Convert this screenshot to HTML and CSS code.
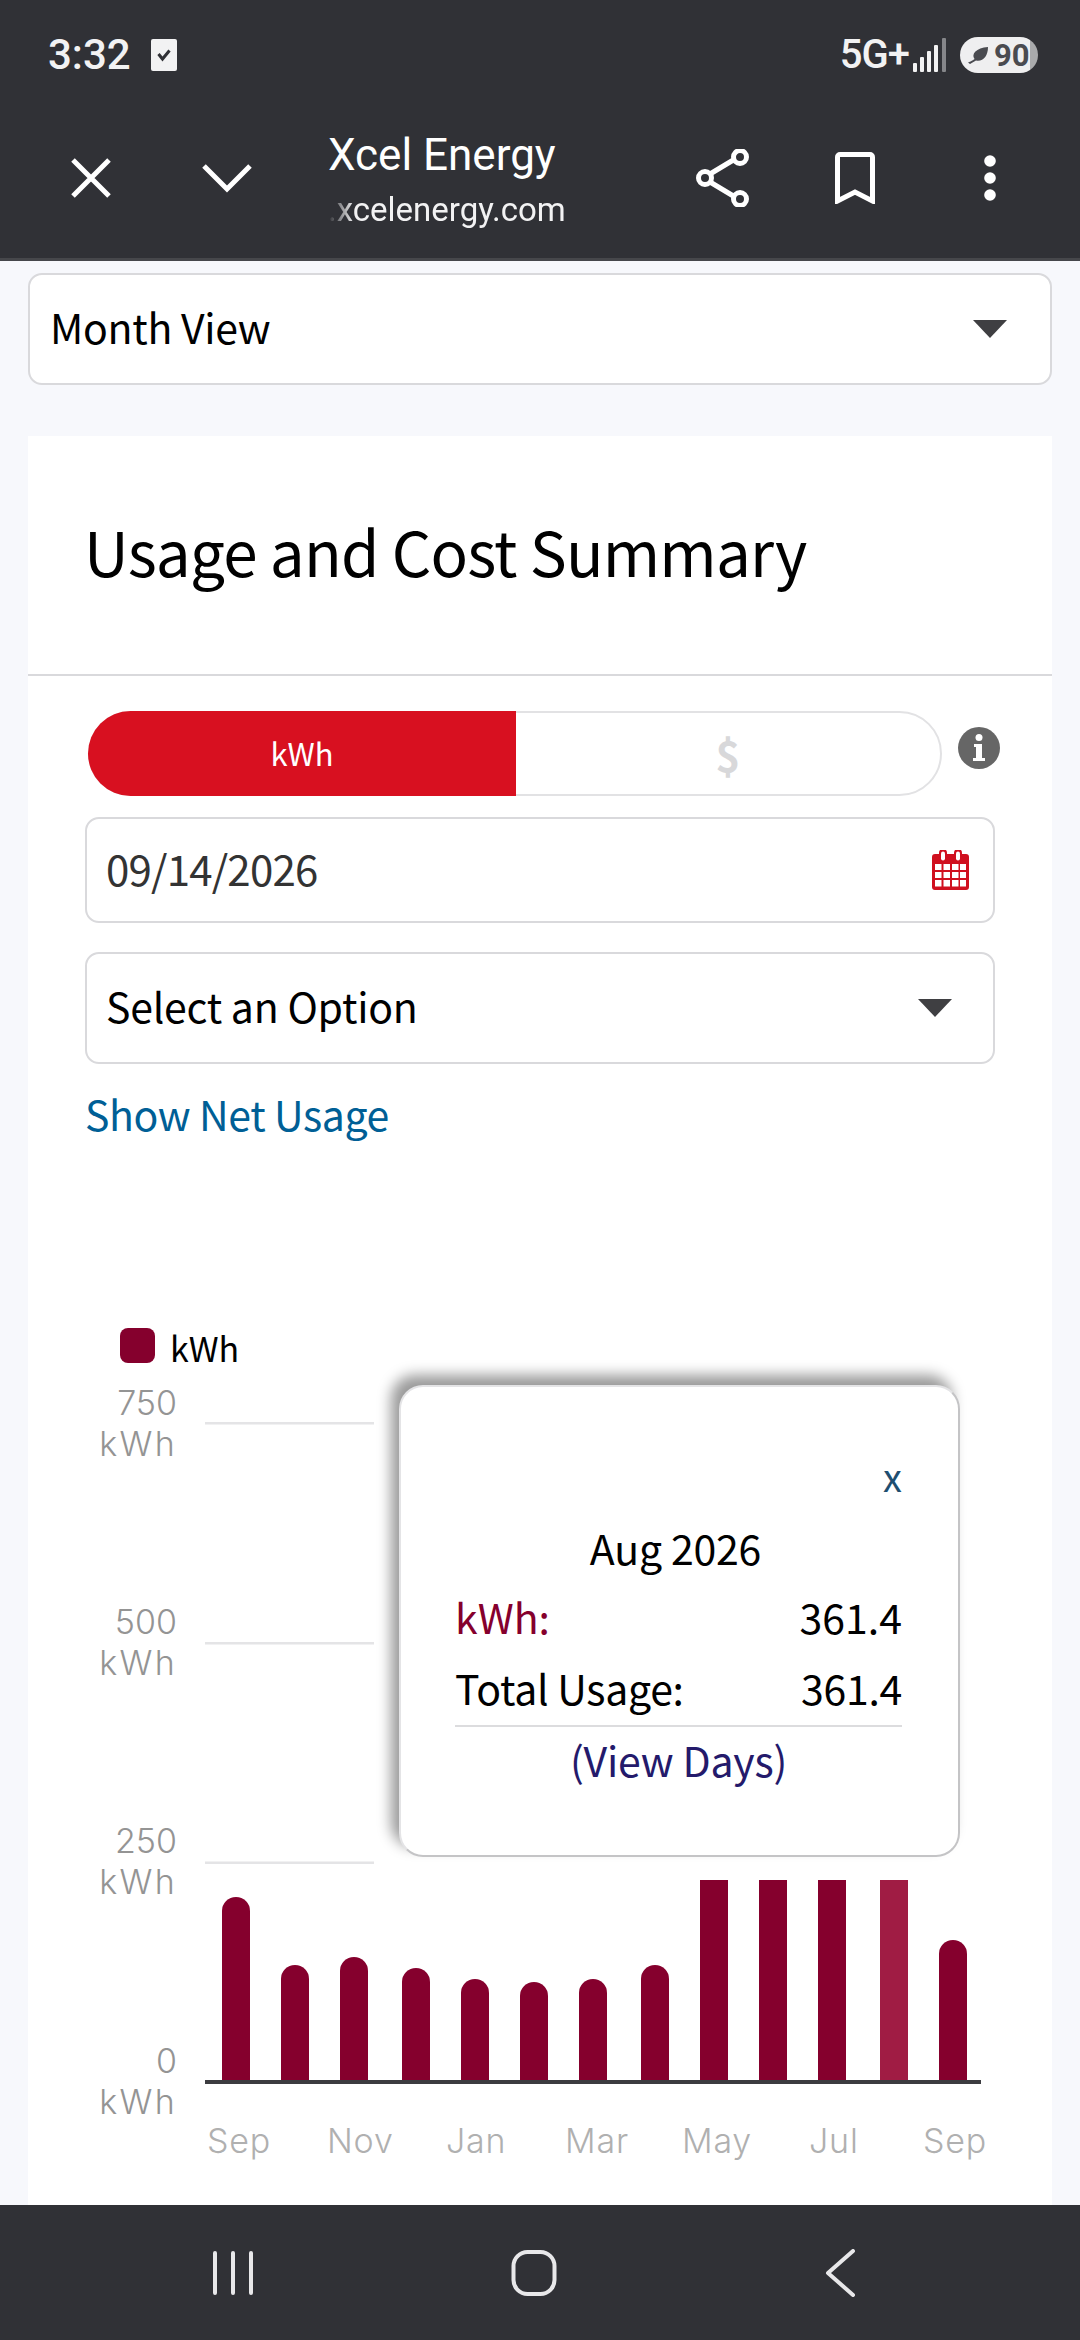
FILE: index.html
```html
<!DOCTYPE html>
<html lang="en">
<head>
<meta charset="utf-8">
<title>Xcel Energy</title>
<link rel="stylesheet" href="styles.css">
</head>
<body>
<div class="screen">
  <header class="top">
    <div class="status">
      <div class="status-left">
        <span class="time">3:32</span>
        <svg class="check" width="26" height="32" viewBox="0 0 26 32"><rect width="26" height="32" rx="2" fill="#f2f2f3"/><path d="M7.5 15l4 5 7-8.5" fill="none" stroke="#303136" stroke-width="3"/></svg>
      </div>
      <div class="status-right">
        <span class="net">5G+</span>
        <svg class="signal" width="34" height="34" viewBox="0 0 34 34"><g fill="#f2f2f3"><rect x="0" y="25" width="4" height="9" rx="1"/><rect x="7" y="19" width="4" height="15" rx="1"/><rect x="14" y="13" width="4" height="21" rx="1"/><rect x="21" y="7" width="4" height="27" rx="1"/></g><rect x="29" y="0" width="4" height="34" rx="1" fill="#85868a"/></svg>
        <div class="battery">
          <svg width="20" height="18" viewBox="0 0 20 18"><path d="M0 16.5C4 15 5 14 6.5 13 3 8 8 2 20 1c0 9-5 15-12 13.500L2 18z" fill="#4a4b50"/></svg>
          <span>90</span>
        </div>
      </div>
    </div>
    <div class="toolbar">
      <svg class="tb-close" width="40" height="40" viewBox="0 0 40 40"><path d="M2 2l36 36M38 2L2 38" stroke="#fff" stroke-width="5" fill="none"/></svg>
      <svg class="tb-chev" width="52" height="30" viewBox="0 0 52 30"><path d="M3 3l23 23L49 3" stroke="#fff" stroke-width="5" fill="none"/></svg>
      <div class="tb-title">
        <div class="tb-name">Xcel Energy</div>
        <div class="tb-url">.xcelenergy.com</div>
      </div>
      <svg class="tb-share" width="54" height="58" viewBox="0 0 54 58"><g fill="none" stroke="#fff" stroke-width="5"><path d="M14 25L39 10M14 33l25 15"/><circle cx="9" cy="29" r="6.500"/><circle cx="44" cy="8" r="6.500"/><circle cx="44" cy="50" r="6.500"/></g></svg>
      <svg class="tb-mark" width="40" height="52" viewBox="0 0 40 52"><path d="M2.500 49V5a2.500 2.500 0 0 1 2.500-2.500h30a2.500 2.500 0 0 1 2.500 2.500v44L20 40z" fill="none" stroke="#fff" stroke-width="5"/></svg>
      <svg class="tb-more" width="12" height="46" viewBox="0 0 12 46"><circle cx="6" cy="6" r="5.800" fill="#fff"/><circle cx="6" cy="23" r="5.800" fill="#fff"/><circle cx="6" cy="40" r="5.800" fill="#fff"/></svg>
    </div>
  </header>

  <main class="page">
    <div class="field view-select"><span>Month View</span><i class="tri"></i></div>
    <section class="card">
      <h1 class="card-title">Usage and Cost Summary</h1>
      <div class="card-body">
        <div class="toggle-row">
          <div class="toggle">
            <div class="toggle-on">kWh</div>
            <div class="toggle-off">$</div>
          </div>
          <svg class="info" width="42" height="42" viewBox="0 0 42 42"><circle cx="21" cy="21" r="21" fill="#666"/><circle cx="21" cy="10.500" r="3.500" fill="#fff"/><path d="M16 17h8v14h3v3H15v-3h3V20h-2z" fill="#fff"/></svg>
        </div>
        <div class="field date-field"><span>09/14/2026</span>
          <svg width="37" height="40" viewBox="0 0 37 40"><path d="M3 4h4V3a4 4 0 0 1 8 0v1h7V3a4 4 0 0 1 8 0v1h4a3 3 0 0 1 3 3v30a3 3 0 0 1-3 3H3a3 3 0 0 1-3-3V7a3 3 0 0 1 3-3z" fill="#d0101f"/><g fill="#fff"><rect x="9" y="1.500" width="4" height="9" rx="2"/><rect x="24" y="1.500" width="4" height="9" rx="2"/><rect x="3" y="14" width="6.500" height="6"/><rect x="11.500" y="14" width="6.500" height="6"/><rect x="20" y="14" width="6.500" height="6"/><rect x="28" y="14" width="6" height="6"/><rect x="3" y="22" width="6.500" height="6"/><rect x="11.500" y="22" width="6.500" height="6"/><rect x="20" y="22" width="6.500" height="6"/><rect x="28" y="22" width="6" height="6"/><rect x="3" y="30" width="6.500" height="6.500"/><rect x="11.500" y="30" width="6.500" height="6.500"/><rect x="20" y="30" width="6.500" height="6.500"/><rect x="28" y="30" width="6" height="6.500"/></g></svg>
        </div>
        <div class="field option-field"><span>Select an Option</span><i class="tri"></i></div>
        <a class="net-link">Show Net Usage</a>
      </div>
      <div class="chart">
        <svg class="chart-svg" width="1024" height="905" viewBox="28 1300 1024 905">
          <rect x="120" y="1328" width="35" height="35" rx="8" fill="#85002d"/>
          <text class="legend" x="170" y="1362">kWh</text>
          <g class="grid">
            <rect x="205" y="1422" width="169" height="2.500"/>
            <rect x="205" y="1642" width="169" height="2.500"/>
            <rect x="205" y="1861.500" width="169" height="2.500"/>
          </g>
          <g class="ylab" text-anchor="end">
            <text x="177" y="1415">750</text><text class="unit" x="177" y="1456">kWh</text>
            <text x="177" y="1634">500</text><text class="unit" x="177" y="1675">kWh</text>
            <text x="177" y="1853">250</text><text class="unit" x="177" y="1894">kWh</text>
            <text x="177" y="2073">0</text><text class="unit" x="177" y="2114">kWh</text>
          </g>
          <g fill="#85002d">
            <path d="M222 2080v-169a14 14 0 0 1 28 0v169z"/>
            <path d="M281 2080v-101a14 14 0 0 1 28 0v101z"/>
            <path d="M340 2080v-109a14 14 0 0 1 28 0v109z"/>
            <path d="M402 2080v-98a14 14 0 0 1 28 0v98z"/>
            <path d="M461 2080v-87a14 14 0 0 1 28 0v87z"/>
            <path d="M520 2080v-84a14 14 0 0 1 28 0v84z"/>
            <path d="M579 2080v-87a14 14 0 0 1 28 0v87z"/>
            <path d="M641 2080v-101a14 14 0 0 1 28 0v101z"/>
            <rect x="700" y="1880" width="28" height="200"/>
            <rect x="759" y="1880" width="28" height="200"/>
            <rect x="818" y="1880" width="28" height="200"/>
            <rect x="880" y="1880" width="28" height="200" fill="#a01c44"/>
            <path d="M939 2080v-126a14 14 0 0 1 28 0v126z"/>
          </g>
          <rect x="205" y="2080" width="776" height="4" fill="#3c3c40"/>
          <g class="xlab">
            <text x="207" y="2153">Sep</text>
            <text x="327" y="2153">Nov</text>
            <text x="446" y="2153">Jan</text>
            <text x="565" y="2153">Mar</text>
            <text x="682" y="2153">May</text>
            <text x="809" y="2153">Jul</text>
            <text x="923" y="2153">Sep</text>
          </g>
        </svg>
        <div class="tip">
          <div class="tip-x">x</div>
          <div class="tip-date">Aug 2026</div>
          <div class="tip-row tip-kwh"><span>kWh:</span><span class="tip-num">361.4</span></div>
          <div class="tip-row tip-total"><span>Total Usage:</span><span class="tip-num">361.4</span></div>
          <div class="tip-days">(View Days)</div>
        </div>
      </div>
    </section>
  </main>

  <footer class="nav">
    <svg width="44" height="44" viewBox="0 0 44 44"><path d="M4 2v40M22 2v40M40 2v40" stroke="#e8e8ea" stroke-width="4" stroke-linecap="round" fill="none"/></svg>
    <svg width="46" height="48" viewBox="0 0 46 48"><rect x="2.500" y="3" width="41" height="42" rx="14" fill="none" stroke="#e8e8ea" stroke-width="4"/></svg>
    <svg width="32" height="48" viewBox="0 0 32 48"><path d="M29 2L4 24l25 22" stroke="#e8e8ea" stroke-width="4" stroke-linecap="round" stroke-linejoin="round" fill="none"/></svg>
  </footer>
</div>
</body>
</html>
```

FILE: styles.css
```css
* { box-sizing: border-box; }
html, body { margin: 0; padding: 0; }
body { width: 1080px; height: 2340px; overflow: hidden; background: #f7f8fc; font-family: "Noto Sans CJK SC", "Noto Sans", sans-serif; color: #000; }
.screen { width: 1080px; height: 2340px; display: flex; flex-direction: column; overflow: hidden; }

.top { background: #303136; height: 261px; flex: none; border-bottom: 3px solid #46474b; color: #fff; font-family: Roboto, sans-serif; }
.status { height: 110px; padding: 0 42px 0 48px; display: flex; justify-content: space-between; align-items: center; }
.status-left { display: flex; align-items: center; gap: 20px; }
.time { font-size: 42px; font-weight: 500; color: #f2f2f3; line-height: 40px; }
.status-right { display: flex; align-items: center; }
.net { font-size: 40px; font-weight: 500; color: #f2f2f3; line-height: 40px; letter-spacing: -1px; }
.signal { margin: 0 13px 0 4px; }
.battery { width: 78px; height: 36px; border-radius: 18px; background: linear-gradient(90deg, #efeff0 90%, #a9aaac 90%); display: flex; align-items: center; padding-left: 8px; gap: 6px; color: #4a4b50; font-size: 31px; font-weight: 700; }
.toolbar { height: 148px; display: flex; align-items: center; padding-bottom: 12px; }
.tb-close { margin-left: 71px; }
.tb-chev { margin-left: 90px; }
.tb-title { margin-left: 75px; width: 300px; flex: none; }
.tb-name { font-size: 44px; line-height: 50px; white-space: nowrap; margin-top: 5px; }
.tb-url { height: 42px; margin-top: 9px; font-size: 33px; line-height: 42px; white-space: nowrap; color: #f2f2f3; -webkit-mask-image: linear-gradient(90deg, transparent 0, #000 26px); mask-image: linear-gradient(90deg, transparent 0, #000 26px); }
.tb-share { margin-left: 68px; }
.tb-mark { margin-left: 85px; }
.tb-more { margin-left: 109px; }

.page { flex: 1; min-height: 0; overflow: hidden; padding: 12px 28px 0; }
.field { background: #fff; border: 2px solid #d9d9dc; border-radius: 14px; display: flex; align-items: center; justify-content: space-between; }
.field > span { padding-bottom: 6px; }
.tri { width: 0; height: 0; border-left: 17px solid transparent; border-right: 17px solid transparent; border-top: 18px solid #3f3f42; }
.view-select { height: 112px; width: 1024px; padding: 0 43px 0 20px; font-size: 41px; letter-spacing: -.3px; }
.card { margin-top: 51px; background: #fff; width: 1024px; height: 1800px; }
.card-title { margin: 0; height: 240px; border-bottom: 2px solid #d9d9dc; padding: 71px 0 0 56px; font-size: 62px; letter-spacing: -.8px; font-weight: 400; line-height: 86px; }
.card-body { padding: 35px 57px 0; }
.toggle-row { display: flex; gap: 16px; padding-left: 3px; width: 930px; }
.toggle { flex: none; width: 854px; height: 85px; border: 2px solid #e2e2e4; border-radius: 43px; display: flex; }
.toggle-on { width: 428px; margin: -2px 0 -2px -2px; background: #d81020; border-radius: 43px 0 0 43px; color: #fff; font-size: 31px; display: flex; align-items: center; justify-content: center; padding-bottom: 2px; }
.toggle-off { flex: 1; color: #d8d8da; font-size: 42px; font-weight: 700; display: flex; align-items: center; justify-content: center; }
.info { flex: none; margin-top: 16px; }
.date-field { width: 910px; height: 106px; margin-top: 21px; padding: 0 24px 0 19px; font-size: 42px; letter-spacing: -.8px; color: #333; }
.option-field { width: 910px; height: 112px; margin-top: 29px; padding: 0 41px 0 19px; font-size: 41px; letter-spacing: -.25px; }
.net-link { display: block; margin-top: 19px; font-size: 41px; letter-spacing: -.4px; line-height: 60px; color: #005f96; }
.chart { position: relative; margin-top: 157px; height: 905px; }
.chart-svg { display: block; }
.legend { font-size: 34px; fill: #000; font-family: "Noto Sans CJK SC", sans-serif; }
.grid rect { fill: #e4e4e6; }
.ylab { font-family: Inter, sans-serif; font-weight: 300; font-size: 34px; fill: #949494; }
.unit { letter-spacing: 2.300px; }
.xlab { font-family: Inter, sans-serif; font-weight: 300; font-size: 34px; letter-spacing: .8px; fill: #b0b0b0; }
.tip { position: absolute; left: 371px; top: 85px; width: 561px; height: 472px; background: #fff; border: 2px solid #c4c4c6; border-top-color: #e4e4e6; border-left-color: #e4e4e6; border-radius: 24px; box-shadow: -8px -10px 14px rgba(0,0,0,.4); padding: 61px 56px 0 54px; }
.tip-x { text-align: right; font-size: 38px; line-height: 56px; color: #1e4e70; }
.tip-date { text-align: center; font-size: 41px; letter-spacing: -.2px; line-height: 60px; margin-top: 13px; padding-right: 6px; }
.tip-row { display: flex; justify-content: space-between; font-size: 41px; line-height: 60px; }
.tip-kwh { margin-top: 9px; color: #85002d; }
.tip-total { margin-top: 11px; border-bottom: 2px solid #dcdcde; height: 70px; letter-spacing: -.3px; }
.tip-num { color: #000; }
.tip-days { text-align: center; font-size: 41px; letter-spacing: -.2px; line-height: 60px; margin-top: 2px; color: #241a6b; }

.nav { flex: none; height: 135px; background: #303136; display: flex; align-items: center; padding: 0 0 0 211px; }
.nav svg:nth-child(2) { margin-left: 256px; }
.nav svg:nth-child(3) { margin-left: 267px; }
```
